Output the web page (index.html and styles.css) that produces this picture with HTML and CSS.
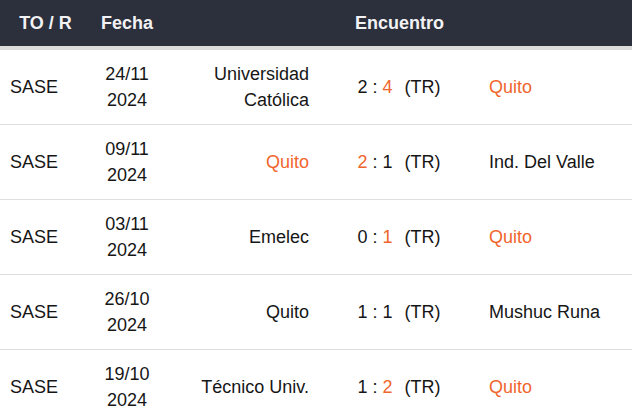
FILE: index.html
```html
<!DOCTYPE html>
<html lang="es">
<head>
<meta charset="utf-8">
<link rel="stylesheet" href="styles.css">
</head>
<body>
<div class="table">
  <div class="head">
    <div class="h-to">TO / R</div>
    <div class="h-date">Fecha</div>
    <div class="h-match">Encuentro</div>
  </div>
  <div class="row">
    <div class="to">SASE</div>
    <div class="date"><span>24/11</span><span>2024</span></div>
    <div class="home">Universidad Católica</div>
    <div class="score">2 : <span class="win">4</span><span class="tr">(TR)</span></div>
    <div class="away win">Quito</div>
  </div>
  <div class="row">
    <div class="to">SASE</div>
    <div class="date"><span>09/11</span><span>2024</span></div>
    <div class="home win">Quito</div>
    <div class="score"><span class="win">2</span> : 1<span class="tr">(TR)</span></div>
    <div class="away">Ind. Del Valle</div>
  </div>
  <div class="row">
    <div class="to">SASE</div>
    <div class="date"><span>03/11</span><span>2024</span></div>
    <div class="home">Emelec</div>
    <div class="score">0 : <span class="win">1</span><span class="tr">(TR)</span></div>
    <div class="away win">Quito</div>
  </div>
  <div class="row">
    <div class="to">SASE</div>
    <div class="date"><span>26/10</span><span>2024</span></div>
    <div class="home">Quito</div>
    <div class="score">1 : 1<span class="tr">(TR)</span></div>
    <div class="away">Mushuc Runa</div>
  </div>
  <div class="row">
    <div class="to">SASE</div>
    <div class="date"><span>19/10</span><span>2024</span></div>
    <div class="home">Técnico Univ.</div>
    <div class="score">1 : <span class="win">2</span><span class="tr">(TR)</span></div>
    <div class="away win">Quito</div>
  </div>
</div>
</body>
</html>
```
FILE: styles.css
```css
html, body {
  margin: 0;
  padding: 0;
  background: #ffffff;
}
body {
  font-family: "Liberation Sans", Arial, sans-serif;
  font-size: 18px;
  color: #161616;
  line-height: 26px;
}
.table {
  width: 632px;
}
.head {
  display: grid;
  grid-template-columns: 91px 72px 1fr;
  align-items: center;
  height: 46px;
  background: #2b303c;
  color: #f2f2f4;
  font-weight: bold;
  border-bottom: 4px solid #dcdcdc;
}
.h-to, .h-date, .h-match {
  text-align: center;
}
.h-match {
  padding-left: 4px;
}
.row {
  display: grid;
  grid-template-columns: 91px 72px 146px 180px 1fr;
  align-items: center;
  height: 74px;
  border-bottom: 1px solid #dedede;
}
.row:last-child {
  border-bottom: none;
}
.to {
  padding-left: 10px;
}
.date {
  display: flex;
  flex-direction: column;
  align-items: center;
}
.home {
  text-align: right;
}
.score {
  text-align: center;
}
.tr {
  margin-left: 12px;
}
.away {
  text-align: left;
}
.win {
  color: #f0662d;
}
```
